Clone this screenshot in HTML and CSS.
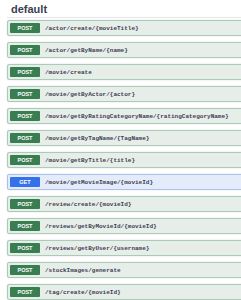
FILE: index.html
```html
<!DOCTYPE html>
<html lang="en">
<head>
  <meta charset="UTF-8">
  <meta name="viewport" content="width=device-width, initial-scale=1.0">
  <title>API - default</title>
  <link rel="stylesheet" href="styles.css">
</head>
<body>

  <div class="section">
    <h3 class="tag-title">default</h3>

    <div class="op-list">
      <div class="op op-post"><span class="method">POST</span><span class="path">/actor/create/{movieTitle}</span></div>
      <div class="op op-post"><span class="method">POST</span><span class="path">/actor/getByName/{name}</span></div>
      <div class="op op-post"><span class="method">POST</span><span class="path">/movie/create</span></div>
      <div class="op op-post"><span class="method">POST</span><span class="path">/movie/getByActor/{actor}</span></div>
      <div class="op op-post"><span class="method">POST</span><span class="path">/movie/getByRatingCategoryName/{ratingCategoryName}</span></div>
      <div class="op op-post"><span class="method">POST</span><span class="path">/movie/getByTagName/{TagName}</span></div>
      <div class="op op-post"><span class="method">POST</span><span class="path">/movie/getByTitle/{title}</span></div>
      <div class="op op-get"><span class="method">GET</span><span class="path">/movie/getMovieImage/{movieId}</span></div>
      <div class="op op-post"><span class="method">POST</span><span class="path">/review/create/{movieId}</span></div>
      <div class="op op-post"><span class="method">POST</span><span class="path">/reviews/getByMovieId/{movieId}</span></div>
      <div class="op op-post"><span class="method">POST</span><span class="path">/reviews/getByUser/{username}</span></div>
      <div class="op op-post"><span class="method">POST</span><span class="path">/stockImages/generate</span></div>
      <div class="op op-post"><span class="method">POST</span><span class="path">/tag/create/{movieId}</span></div>
    </div>
  </div>

</body>
</html>
```

FILE: styles.css
```css
* {
  margin: 0;
  padding: 0;
  box-sizing: border-box;
}

body {
  font-family: "Liberation Sans", Arial, sans-serif;
  background-color: #fff;
  color: #3b4151;
  overflow: hidden;
}

.section {
  padding-left: 7px;
  overflow: hidden;
}

.tag-title {
  font-size: 11px;
  font-weight: bold;
  line-height: 13px;
  padding: 3px 0 1px 4px;
  border-bottom: 1px solid #e4e6ea;
  margin-bottom: 2px;
}

.op-list {
  display: flex;
  flex-direction: column;
  gap: 6px;
  margin-right: -6px;
}

.op {
  display: flex;
  align-items: center;
  height: 16px;
  padding: 0 2px;
  border: 1px solid #a9ccb8;
  border-radius: 2px;
  background-color: #e7eee9;
  box-shadow: 0 0 2px rgba(0, 0, 0, 0.12);
  overflow: hidden;
}

.method {
  width: 30px;
  height: 10px;
  line-height: 10px;
  border-radius: 1px;
  text-align: center;
  font-size: 5.5px;
  font-weight: bold;
  color: #fff;
  background-color: #3a7d51;
  flex-shrink: 0;
}

.path {
  margin-left: 5px;
  font-family: "Liberation Mono", "DejaVu Sans Mono", monospace;
  font-size: 6px;
  font-weight: bold;
  white-space: nowrap;
  color: #3b4151;
}

.op-get {
  border-color: #a8c2f0;
  background-color: #e4ebfa;
}

.op-get .method {
  background-color: #3572ea;
}
```
